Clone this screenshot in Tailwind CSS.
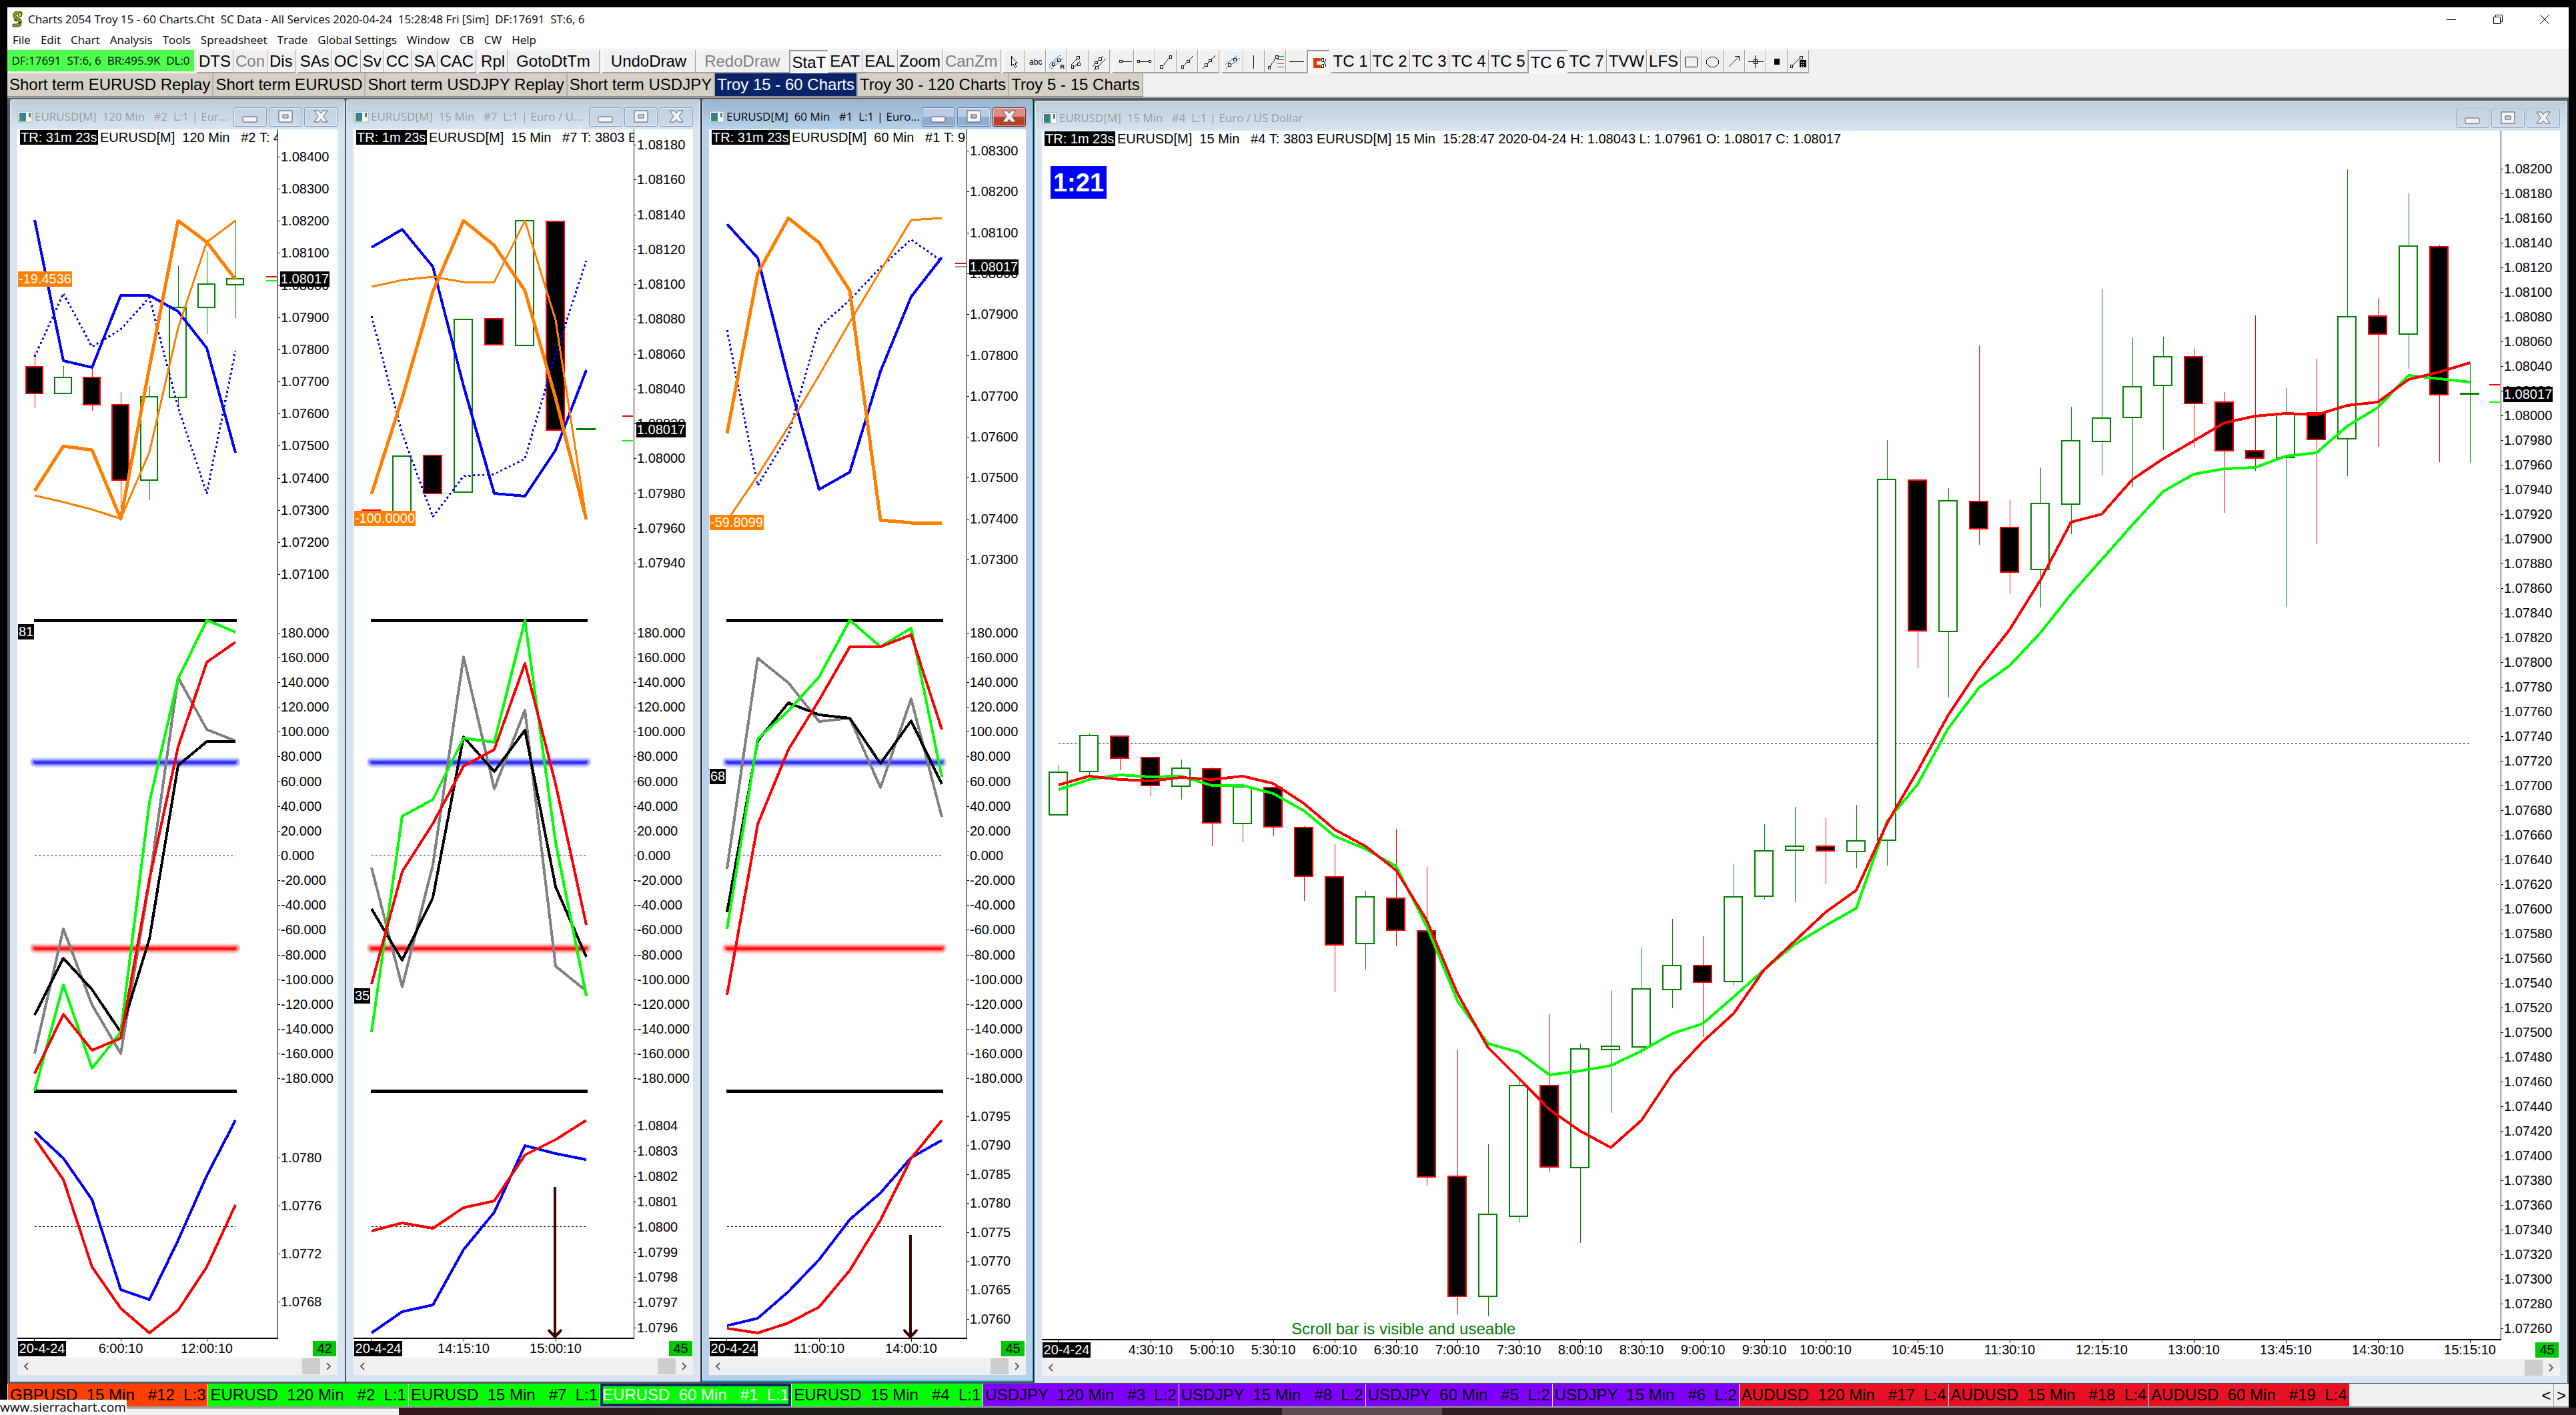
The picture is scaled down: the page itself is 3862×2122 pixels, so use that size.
<!DOCTYPE html>
<html lang="en">
<head>
  <meta charset="UTF-8" />
  <meta name="viewport" content="width=device-width, initial-scale=1.0" />
  <title>Charts 2054 Troy 15 - 60 Charts.Cht</title>
  <script src="https://cdn.jsdelivr.net/npm/@tailwindcss/browser@4"></script>
</head>
<body class="bg-black font-['Liberation_Sans',Arial,sans-serif] text-black">
  <div class="relative flex h-screen flex-col overflow-hidden px-[11px] pt-[11px]">

    <!-- Title bar -->
    <header class="flex h-[35px] shrink-0 items-center bg-white pl-[5px] font-['Open_Sans','Noto_Sans',sans-serif] text-[17px]">
      <svg class="mr-[6px] h-[24px] w-[20px]" viewBox="0 0 20 24" fill="none">
        <path d="M2 22h14" stroke="#b5b5b5" stroke-width="3" />
        <path d="M15 3c-5-3-10 0-9 4s7 4 8 8-3 7-9 6" stroke="#2f3f05" stroke-width="5" stroke-linecap="round" />
        <path d="M15 3c-5-3-10 0-9 4s7 4 8 8-3 7-9 6" stroke="#8fae12" stroke-width="3" stroke-linecap="round" />
        <circle cx="14" cy="5" r="3" fill="#c6d62a" stroke="#2f3f05" />
        <path d="M5 12l4 3M12 18l4-2" stroke="#2f3f05" stroke-width="2" />
      </svg>
      <h1 class="whitespace-pre">Charts 2054 Troy 15 - 60 Charts.Cht  SC Data - All Services 2020-04-24  15:28:48 Fri [Sim]  DF:17691  ST:6, 6</h1>
      <div class="ml-auto flex gap-[10px] pr-[6px]">
        <button aria-label="Minimize" class="flex h-[30px] w-[60px] items-center justify-center">
          <svg class="h-4 w-4" viewBox="0 0 16 16"><path d="M1 8.500h14" stroke="#000" /></svg>
        </button>
        <button aria-label="Restore" class="flex h-[30px] w-[60px] items-center justify-center">
          <svg class="h-4 w-4" viewBox="0 0 16 16" fill="none" stroke="#000"><path d="M1.500 4.500h10v10h-10zM4.500 4V1.500h10v10H12" /></svg>
        </button>
        <button aria-label="Close" class="flex h-[30px] w-[60px] items-center justify-center">
          <svg class="h-4 w-4" viewBox="0 0 16 16"><path d="M1 1l14 14M15 1L1 15" stroke="#000" /></svg>
        </button>
      </div>
    </header>

    <!-- Menu -->
    <nav id="menu" class="flex h-[27px] shrink-0 items-center gap-[15px] bg-white pl-2 font-['Open_Sans','Noto_Sans',sans-serif] text-[17px]"></nav>

    <!-- Control bar -->
    <div id="toolbar" class="flex h-[37px] shrink-0 items-stretch gap-[4px] bg-[#f0f0f0] pt-[2px] text-[24px] leading-[30px]">
      <div class="mb-[3px] flex w-[280px] shrink-0 items-center justify-center whitespace-pre bg-[#4cff4c] font-['Open_Sans','Noto_Sans',sans-serif] text-[17px] leading-[32px]">DF:17691  ST:6, 6  BR:495.9K  DL:0</div>
    </div>

    <!-- Chartbook tabs -->
    <div id="books" class="flex h-[35px] shrink-0 items-stretch bg-[#f0f0f0] text-[24px]"></div>

    <!-- Chart windows -->
    <main id="desktop" class="flex min-h-0 flex-1 border-t-2 border-[#a0a0a0] bg-[#5a5e63] pt-px pr-px pl-[3px]"></main>

    <!-- Chart tabs -->
    <div id="charts" class="flex h-[36px] shrink-0 items-stretch gap-px border-b-2 border-[#9a9a9a] bg-[#f0f0f0] pl-px text-[24px]"></div>

    <!-- Desktop strip under the main window -->
    <div class="-mx-[11px] flex h-[11px] shrink-0 bg-[#2f1f22]">
      <div class="w-[598px] border-t-2 border-[#b4b4b4] bg-[#f0f0f0]"></div>
      <div class="w-[1324px] bg-linear-to-r from-[#35181c] via-[#1e201c] to-[#2a2124]"></div>
      <div class="w-[240px] bg-[#5a4c4e]"></div>
    </div>
    <div class="absolute bottom-0 left-0 h-[23px] w-[190px] bg-white font-['Open_Sans','Noto_Sans',sans-serif] text-[19px] leading-[23px]">www.sierrachart.com</div>
  </div>

  <script>
    const menuItems = ["File", "Edit", "Chart", "Analysis", "Tools", "Spreadsheet", "Trade", "Global Settings", "Window", "CB", "CW", "Help"];
    document.getElementById("menu").innerHTML = menuItems.map(m => `<button>${m}</button>`).join("");

    // Small square handle used by the drawing tool icons
    const knob = (x, y) => `<rect x="${x - 2}" y="${y - 2}" width="4" height="4" fill="#f0f0f0" stroke="#000"/>`;
    const ln = (d, c = "#000") => `<path d="${d}" stroke="${c}" fill="none"/>`;

    const icons = {
      pointer: ln("M12.500 9v15l3-3 3 6 2-1-2-6h4z"),
      text: `<text x="7" y="22" font-size="13" fill="#000">abc</text>`,
      regression: ln("M5 22L23 7M6 30L26 13M5 26L22 12", "#1060c0") + knob(20, 15) + knob(12, 22) + `<text x="22" y="29" font-size="10" font-weight="bold" fill="#000">R</text>`,
      parallel: ln("M6 22L17 12M8 28L20 17") + knob(17, 11) + knob(18, 22) + knob(8, 26),
      channel: ln("M6 25L23 8M8 31L27 13") + knob(18, 13) + knob(12, 19) + knob(13, 27),
      ray: ln("M14 17.500h16") + knob(13, 17),
      segment: ln("M8 17.500h16") + knob(7, 17) + knob(25, 17),
      line: ln("M11 25L23 10") + knob(10, 26) + knob(24, 10),
      rayUp: ln("M10 25L26 8") + knob(9, 26) + knob(18, 17),
      extended: ln("M7 29L27 7") + knob(13, 23) + knob(19, 16),
      channelBlue: ln("M5 22L24 8M6 28L28 12", "#1060c0") + knob(20, 14) + knob(12, 23),
      vertical: ln("M16.500 7v22"),
      fib: ln("M7 27L19 9") + knob(7, 27) + knob(19, 10) + ln("M20 9.500h10", "#0a8a0a") + ln("M20 14.500h10", "#1060c0") + ln("M20 20.500h10", "#e04000") + ln("M20 26.500h10", "#9000c0"),
      horizontal: ln("M5 17.500h23"),
      magnet: `<path d="M20 12h-9v11h9" stroke="#e83a00" stroke-width="5" fill="none"/>` + ln("M21.500 10v5h3v-5zM21.500 20v5h3v-5z") + ln("M27.500 12v3l-2 2 2 3v3"),
      rect: ln("M6.500 10.500h19v15h-19z"),
      ellipse: `<ellipse cx="16" cy="18" rx="10" ry="8" fill="none" stroke="#000"/>`,
      arrow: ln("M8 26L24 10M18 9.500h6.500v6"),
      cross: ln("M5 17.500h24M16.500 7v21M13.500 14.500h6v6h-6z"),
      square: `<rect x="12" y="13" width="9" height="9" fill="#000"/>`,
      calculator: ln("M7 25L20 11") + knob(6, 25) + knob(21, 11) + `<rect x="19" y="15" width="10" height="12" fill="#000"/><path d="M21 18.500h6M21 22h6M21 25h6" stroke="#fff" stroke-dasharray="2 1"/>`
    };

    const groups = [
      ["DTS", "-Con", "Dis"],
      ["SAs", "OC", "Sv", "CC", "SA", "CAC"],
      ["Rpl", "+GotoDtTm"],
      ["+UndoDraw", "+-RedoDraw", "*StaT", "EAT", "EAL", "Zoom", "-CanZm"],
      ["@pointer", "@text", "@regression", "@parallel", "@channel"],
      ["@ray", "@segment", "@line", "@rayUp", "@extended"],
      ["@channelBlue", "@vertical", "@fib", "@horizontal", "*@magnet"],
      ["TC 1", "TC 2", "TC 3", "TC 4", "TC 5", "*TC 6", "TC 7", "TVW", "LFS", "@rect", "@ellipse", "@arrow", "@cross", "@square", "@calculator"]
    ];

    // Prefixes: - disabled, + wide, * pressed, @ icon
    function toolButton(key) {
      const label = key.replace(/^[-+*@]+/, "");
      const flags = key.slice(0, key.length - label.length);
      const face = flags.includes("*")
        ? "border-t-2 border-l border-[#9a9a9a] bg-[#f8f8f8] leading-[28px]"
        : "border-r border-b-2 border-[#a0a0a0] bg-[#f0f0f0] shadow-[inset_1px_1px_#fff]";
      if (flags.includes("@")) {
        return `<button aria-label="${label}" class="w-[32px] ${face}"><svg class="h-[32px] w-[31px]" viewBox="0 0 32 34" shape-rendering="crispEdges">${icons[label]}</svg></button>`;
      }
      const pad = flags.includes("+") ? "px-[13px]" : "px-[3px]";
      const ink = flags.includes("-") ? "text-[#7d7d7d]" : "text-black";
      return `<button class="whitespace-nowrap ${pad} ${ink} ${face}">${label}</button>`;
    }
    document.getElementById("toolbar").insertAdjacentHTML("beforeend",
      groups.map(g => `<div class="flex items-stretch">${g.map(toolButton).join("")}</div>`).join(""));

    const books = ["Short term EURUSD Replay", "Short term EURUSD", "Short term USDJPY Replay", "Short term USDJPY", "Troy 15 - 60 Charts", "Troy 30 - 120 Charts", "Troy 5 - 15 Charts"];
    document.getElementById("books").innerHTML = books.map((b, i) => {
      const face = i === 4 ? "bg-[#0a246a] text-white" : "bg-[#d4d0c8]";
      return `<button class="whitespace-nowrap border-r-2 border-b border-r-[#b4b0a8] border-b-[#8a8a8a] px-[3px] leading-[30px] ${face}">${b}</button>`;
    }).join("");

    const tabs = [
      ["GBPUSD  15 Min   #12  L:3", "bg-[#ff4000]"],
      ["EURUSD  120 Min   #2  L:1", "bg-[#00ff00]"],
      ["EURUSD  15 Min   #7  L:1", "bg-[#00ff00]"],
      ["EURUSD  60 Min   #1  L:1", "bg-[#00ff00] text-white shadow-[inset_0_0_0_4px_#0a246a]"],
      ["EURUSD  15 Min   #4  L:1", "bg-[#00ff00]"],
      ["USDJPY  120 Min   #3  L:2", "bg-[#8000ff]"],
      ["USDJPY  15 Min   #8  L:2", "bg-[#8000ff]"],
      ["USDJPY  60 Min   #5  L:2", "bg-[#8000ff]"],
      ["USDJPY  15 Min   #6  L:2", "bg-[#8000ff]"],
      ["AUDUSD  120 Min   #17  L:4", "bg-[#e81123]"],
      ["AUDUSD  15 Min   #18  L:4", "bg-[#e81123]"],
      ["AUDUSD  60 Min   #19  L:4", "bg-[#e81123]"]
    ];
    document.getElementById("charts").innerHTML =
      tabs.map(([t, c]) => `<button class="whitespace-pre px-[3px] leading-[34px] ${c}">${t}</button>`).join("") +
      `<div class="ml-auto flex"><button class="w-[22px] border-r border-[#a0a0a0]">&lt;</button><button class="w-[22px]">&gt;</button></div>`;

    // ---- Charts ----
    const BLUE = "#0000ff", ORANGE = "#ff8000", GRAY = "#808080", BLACK = "#000", GREEN = "#00ff00", RED = "#ff0000";

    const charts = [
      {
        caption: "EURUSD[M]  120 Min   #2  L:1 | Eur...", tr: "TR: 31m 23s", trW: 117,
        header: "EURUSD[M]  120 Min   #2 T: 4", size: "flex-[480] mb-[2px]",
        x: 26, y: 194, w: 480, axis: 416, right: 504, first: 52, step: 43, body: 26, num: "42",
        scales: [{ from: 1.084, by: -0.001, n: 14, dp: 5, y: 235, dy: 48.15 }, { from: 1.078, by: -0.0004, n: 4, dp: 4, y: 1736, dy: 72 }],
        times: [[3, "6:00:10"], [6, "12:00:10"]],
        marks: [[415, RED], [421, GREEN]], price: 418, tag: [418, "-19.4536", 81], level: [947, "81"],
        candles: [["r", 550, 590, 527, 612], ["g", 566, 590, 549, 590], ["r", 566, 607, 550, 616], ["r", 607, 720, 588, 778], ["g", 595, 720, 579, 750], ["g", 461, 596, 399, 608], ["g", 426, 461, 377, 501], ["g", 418, 427, 331, 477]],
        lines: [
          [BLUE, 4, [330, 541, 551, 443, 443, 467, 522, 679]],
          [BLUE, 3, [535, 440, 520, 494, 446, 611, 740, 526], "3 4"],
          [ORANGE, 5, [736, 669, 675, 778, 551, 331, 363, 419]],
          [ORANGE, 3, [743, 753, 764, 778, 678, 492, 363, 331]],
          [GRAY, 4, [1580, 1393, 1507, 1580, 1322, 1016, 1094, 1111]],
          [BLACK, 4, [1522, 1437, 1484, 1548, 1408, 1148, 1112, 1112]],
          [GREEN, 4, [1636, 1477, 1602, 1548, 1203, 1018, 930, 948]],
          [RED, 4, [1610, 1521, 1575, 1557, 1319, 1120, 993, 963]],
          [BLUE, 4, [1697, 1737, 1799, 1934, 1949, 1860, 1763, 1680]],
          [RED, 4, [1707, 1769, 1900, 1962, 1999, 1965, 1900, 1807]]
        ]
      },
      {
        caption: "EURUSD[M]  15 Min   #7  L:1 | Euro / U...", tr: "TR: 1m 23s", trW: 106,
        header: "EURUSD[M]  15 Min   #7 T: 3803 E", size: "flex-[509] mb-[2px]",
        x: 530, y: 194, w: 509, axis: 950, right: 1038, first: 557, step: 46, body: 28, num: "45",
        scales: [{ from: 1.0818, by: -0.0002, n: 13, dp: 5, y: 217, dy: 52.26 }, { from: 1.0804, by: -0.0001, n: 9, dp: 4, y: 1688, dy: 37.9 }],
        times: [[3, "14:15:10"], [6, "15:00:10"]],
        marks: [[624, RED], [661, GREEN]], price: 644, tag: [777, "-100.0000", 92], level: [1493, "35"], arrow: [6, 1780],
        candles: [["r", 765, 775, 765, 775], ["g", 684, 770, 684, 770], ["r", 683, 740, 683, 740], ["g", 479, 738, 479, 738], ["r", 478, 517, 478, 517], ["g", 331, 518, 331, 518], ["r", 332, 645, 332, 645], ["g", 643, 644, 643, 644]],
        lines: [
          [BLUE, 4, [371, 344, 400, 579, 740, 744, 675, 555]],
          [BLUE, 3, [474, 650, 775, 714, 711, 688, 531, 391], "3 4"],
          [ORANGE, 5, [741, 597, 437, 331, 368, 436, 597, 779]],
          [ORANGE, 3, [430, 420, 415, 423, 423, 331, 480, 779]],
          [GRAY, 4, [1301, 1480, 1297, 985, 1183, 1065, 1449, 1486]],
          [BLACK, 4, [1363, 1440, 1346, 1105, 1157, 1095, 1330, 1435]],
          [GREEN, 4, [1548, 1224, 1199, 1107, 1113, 930, 1264, 1494]],
          [RED, 4, [1476, 1307, 1235, 1149, 1124, 995, 1176, 1387]],
          [BLUE, 4, [1999, 1967, 1957, 1874, 1818, 1718, 1730, 1739]],
          [RED, 4, [1846, 1834, 1842, 1811, 1801, 1732, 1709, 1680]]
        ]
      },
      {
        caption: "EURUSD[M]  60 Min   #1  L:1 | Euro...", tr: "TR: 31m 23s", trW: 117, active: true,
        header: "EURUSD[M]  60 Min   #1 T: 9", size: "flex-[475] mb-[2px]",
        x: 1063, y: 194, w: 475, axis: 1449, right: 1536, first: 1090, step: 46, body: 28, num: "45",
        scales: [{ from: 1.083, by: -0.001, n: 11, dp: 5, y: 226, dy: 61.3 }, { from: 1.0795, by: -0.0005, n: 8, dp: 4, y: 1674, dy: 43.4 }],
        times: [[3, "11:00:10"], [6, "14:00:10"]],
        marks: [[395, RED], [400, "#80a080"]], price: 400, tag: [783, "-59.8099", 81], level: [1164, "68"], arrow: [6, 1852],
        candles: [],
        lines: [
          [BLUE, 4, [336, 387, 568, 734, 708, 557, 445, 386]],
          [BLUE, 3, [495, 728, 652, 491, 450, 401, 359, 392], "3 4"],
          [ORANGE, 5, [650, 410, 327, 364, 436, 780, 784, 784]],
          [ORANGE, 3, [781, 713, 640, 563, 483, 406, 330, 327]],
          [GRAY, 4, [1303, 987, 1024, 1082, 1077, 1181, 1048, 1225]],
          [BLACK, 4, [1368, 1111, 1054, 1072, 1077, 1145, 1081, 1176]],
          [GREEN, 4, [1393, 1108, 1066, 1015, 930, 970, 942, 1165]],
          [RED, 4, [1492, 1236, 1124, 1050, 970, 970, 952, 1094]],
          [BLUE, 4, [1988, 1977, 1937, 1889, 1829, 1789, 1736, 1710]],
          [RED, 4, [1992, 1999, 1984, 1960, 1905, 1830, 1737, 1680]]
        ]
      },
      {
        caption: "EURUSD[M]  15 Min   #4  L:1 | Euro / US Dollar", tr: "TR: 1m 23s", trW: 106, main: true,
        header: "EURUSD[M]  15 Min   #4 T: 3803 EURUSD[M] 15 Min  15:28:47 2020-04-24 H: 1.08043 L: 1.07961 O: 1.08017 C: 1.08017",
        size: "flex-[2276] mt-[2px]",
        x: 1562, y: 196, w: 2276, axis: 3749, right: 3836, first: 1587, step: 46, body: 28, num: "45",
        scales: [{ from: 1.082, by: -0.0002, n: 48, dp: 5, y: 253, dy: 37.01 }],
        times: [[3, "4:30:10"], [5, "5:00:10"], [7, "5:30:10"], [9, "6:00:10"], [11, "6:30:10"], [13, "7:00:10"], [15, "7:30:10"], [17, "8:00:10"], [19, "8:30:10"], [21, "9:00:10"], [23, "9:30:10"], [25, "10:00:10"], [28, "10:45:10"], [31, "11:30:10"], [34, "12:15:10"], [37, "13:00:10"], [40, "13:45:10"], [43, "14:30:10"], [46, "15:15:10"]],
        marks: [[577, RED], [603, GREEN]], price: 591,
        candles: [
          ["g", 1158, 1222, 1147, 1222], ["g", 1103, 1157, 1100, 1162], ["r", 1104, 1137, 1104, 1155], ["r", 1136, 1178, 1136, 1194], ["g", 1152, 1179, 1139, 1199],
          ["r", 1153, 1234, 1151, 1269], ["g", 1180, 1235, 1174, 1263], ["r", 1181, 1240, 1181, 1254], ["r", 1241, 1314, 1239, 1351], ["r", 1315, 1417, 1266, 1488],
          ["g", 1345, 1415, 1336, 1454], ["r", 1347, 1395, 1243, 1419], ["r", 1396, 1765, 1300, 1779], ["r", 1764, 1944, 1574, 1972], ["g", 1821, 1944, 1716, 1974],
          ["g", 1628, 1824, 1615, 1833], ["r", 1628, 1750, 1521, 1757], ["g", 1573, 1751, 1565, 1864], ["g", 1569, 1574, 1485, 1669], ["g", 1483, 1570, 1421, 1581],
          ["g", 1448, 1484, 1378, 1512], ["r", 1448, 1473, 1404, 1555], ["g", 1345, 1472, 1295, 1478], ["g", 1276, 1344, 1236, 1349], ["g", 1269, 1275, 1210, 1353],
          ["r", 1269, 1276, 1226, 1326], ["g", 1261, 1277, 1207, 1302], ["g", 719, 1260, 660, 1298], ["r", 720, 946, 720, 1002], ["g", 751, 947, 732, 1046],
          ["r", 752, 793, 518, 817], ["r", 791, 858, 749, 891], ["g", 755, 854, 701, 911], ["g", 661, 756, 610, 801], ["g", 627, 662, 433, 713],
          ["g", 580, 626, 507, 731], ["g", 535, 578, 505, 675], ["r", 535, 605, 521, 671], ["r", 603, 676, 588, 769], ["r", 676, 687, 473, 706],
          ["g", 620, 686, 582, 910], ["r", 619, 659, 538, 816], ["g", 475, 658, 254, 714], ["r", 474, 501, 447, 670], ["g", 369, 501, 290, 553],
          ["r", 370, 592, 367, 693], ["g", 590, 591, 544, 694]
        ],
        lines: [
          [GREEN, 4, [1184, 1169, 1162, 1165, 1164, 1178, 1178, 1190, 1216, 1254, 1273, 1299, 1389, 1501, 1565, 1578, 1612, 1606, 1598, 1576, 1550, 1535, 1495, 1454, 1416, 1388, 1362, 1232, 1176, 1092, 1031, 998, 949, 891, 839, 787, 737, 711, 703, 701, 684, 679, 639, 611, 563, 568, 573]],
          [RED, 4, [1177, 1164, 1169, 1171, 1166, 1169, 1164, 1175, 1205, 1244, 1269, 1305, 1380, 1490, 1571, 1617, 1664, 1696, 1721, 1680, 1611, 1562, 1520, 1454, 1411, 1368, 1335, 1235, 1156, 1072, 1003, 944, 870, 783, 771, 719, 688, 661, 634, 624, 620, 622, 608, 603, 569, 558, 544]]
        ]
      }
    ];

    const nb = s => s.replace(/ /g, "\u00a0");
    const hline = (x1, x2, y, c, w, extra = "") => `<line x1="${x1}" x2="${x2}" y1="${y}" y2="${y}" stroke="${c}" stroke-width="${w}" ${extra}/>`;
    const label = (x, y, s, c = "#000", anchor = "start") => `<text x="${x}" y="${y + 7}" fill="${c}" text-anchor="${anchor}">${nb(s)}</text>`;
    const box = (x, y, w, s, bg, c) => `<rect x="${x}" y="${y - 11}" width="${w}" height="23" fill="${bg}"/>` + label(x + w / 2, y, s, c, "middle");

    function drawChart(c) {
      const px = i => c.first + c.step * i;
      const count = c.lines[0][2].length;
      const last = px(count - 1);
      const bottom = c.y + 1813;
      let s = "";

      s += `<rect x="${c.x + 4}" y="${c.y + 1}" width="${c.trW}" height="22" fill="#000"/>`;
      s += label(c.x + 5, c.y + 12, c.tr, "#fff") + label(c.x + c.trW + 7, c.y + 12, c.header);

      if (c.main) {
        s += hline(c.first, last, 1114.5, "#000", 1, 'stroke-dasharray="3 3"');
      } else {
        s += hline(c.first, last, 1283.5, "#000", 1, 'stroke-dasharray="3 3"');
        s += hline(c.first, last, 1839.5, "#000", 1, 'stroke-dasharray="3 3"');
        s += hline(c.first - 1, last + 2, 930, "#000", 5) + hline(c.first - 1, last + 2, 1636, "#000", 5);
        // Glowing over/under lines
        [[1143, "#2020ff"], [1422, "#ff0000"]].forEach(([y, col]) => {
          [[15, 0.2], [11, 0.2], [7, 0.4], [3, 1]].forEach(([w, o]) => {
            s += hline(c.first, last, y, col, w, `stroke-linecap="round" stroke-opacity="${o}"`);
          });
        });
      }

      c.candles.forEach(([k, top, bot, hi, lo], i) => {
        const col = k === "g" ? "#008000" : RED;
        const fill = k === "g" ? "#fff" : "#000";
        s += `<path d="M${px(i) + 0.5} ${hi}V${top}M${px(i) + 0.5} ${bot}V${lo}" stroke="${col}"/>`;
        s += `<rect x="${px(i) - c.body / 2}" y="${top}" width="${c.body - 1}" height="${bot - top}" fill="${fill}" stroke="${col}" stroke-width="2"/>`;
      });

      c.lines.forEach(([col, w, ys, dash]) => {
        const pts = ys.map((y, i) => `${px(i)},${y}`).join(" ");
        s += `<polyline points="${pts}" fill="none" stroke="${col}" stroke-width="${w}" stroke-linejoin="round" ${dash ? `stroke-dasharray="${dash}"` : ""}/>`;
      });

      if (c.arrow) {
        const ax = px(c.arrow[0]) - 1;
        s += `<path d="M${ax} ${c.arrow[1]}V2005M${ax - 10} 1994L${ax} 2005L${ax + 10} 1994" stroke="#400000" stroke-width="4" fill="none"/>`;
      }

      // Price scale
      s += `<rect x="${c.axis}" y="${c.y}" width="${c.x + c.w - c.axis}" height="1842" fill="#fff"/>`;
      s += `<path d="M${c.axis + 0.5} ${c.y}V${bottom}" stroke="#000"/>` + hline(c.x, c.axis + 1, bottom, "#000", 2);
      const tick = (y, t) => hline(c.axis, c.axis + 4, y, "#000", 1) + label(c.axis + 5, y, t);
      c.scales.forEach(k => {
        for (let i = 0; i < k.n; i++) s += tick(Math.round(k.y + k.dy * i), (k.from + k.by * i).toFixed(k.dp));
      });
      if (!c.main) {
        for (let v = 180; v >= -180; v -= 20) s += tick(Math.round(1283 - v * 1.858), v.toFixed(3));
      }
      c.marks.forEach(([y, col]) => { s += hline(c.axis - 17, c.axis - 1, y, col, 2); });
      s += box(c.axis + 4, c.price, 74, "1.08017", "#000", "#fff");
      if (c.tag) s += box(c.x + 1, c.tag[0], c.tag[2], c.tag[1], ORANGE, "#fff");
      if (c.level) s += box(c.x + 1, c.level[0], 24, c.level[1], "#000", "#fff");

      // Time scale
      s += `<path d="M${c.first - 0.5} ${bottom}v5" stroke="#000"/>` + box(c.x + 1, bottom + 15, 72, "20-4-24", "#000", "#fff");
      c.times.forEach(([i, t]) => {
        s += `<path d="M${px(i) + 0.5} ${bottom}v5" stroke="#000"/>` + label(px(i), bottom + 15, t, "#000", "middle");
      });
      s += box(c.right - 35, bottom + 15, 35, c.num, "#00c800", "#000");

      if (c.main) {
        s += `<rect x="1575" y="249" width="84" height="49" fill="#0000ff"/><text x="1617" y="287" class="text-[38px] font-bold" fill="#fff" text-anchor="middle">1:21</text>`;
        s += `<text x="1936" y="2001" class="text-[24px]" fill="#008000">Scroll bar is visible and useable</text>`;
      }
      return `<svg class="block min-h-0 w-full flex-1 bg-white text-[20px]" viewBox="${c.x} ${c.y} ${c.w} 1842" shape-rendering="crispEdges">${s}</svg>`;
    }

    function frameButtons(active) {
      const face = active
        ? "border-[#5f7ba3] bg-linear-to-b from-[#b9cde6] from-50% to-[#8fadd0] to-50%"
        : "border-[#8b9cba] bg-linear-to-b from-[#c3d1e1] to-[#ccdaea]";
      const close = active ? "border-[#6b2a22] bg-linear-to-b from-[#dc8c80] from-50% to-[#b8402a] to-50%" : face;
      const base = "flex h-[29px] w-[50px] shrink-0 items-center justify-center rounded-[3px] border shadow-[inset_0_0_0_1px_#ffffff80]";
      return `
        <button aria-label="Minimize" class="${base} ${face}"><svg class="h-[20px] w-[26px]" viewBox="0 0 26 20"><rect x="2" y="10" width="21" height="8" rx="1" fill="#f4f4f4" stroke="#535666"/></svg></button>
        <button aria-label="Maximize" class="${base} ${face}"><svg class="h-[20px] w-[26px]" viewBox="0 0 26 20"><path fill-rule="evenodd" d="M3 1h20v17H3zM9 7v5h8V7z" fill="#f4f4f4" stroke="#535666"/></svg></button>
        <button aria-label="Close" class="${base} ${close}"><svg class="h-[20px] w-[26px]" viewBox="0 0 26 20"><path d="M3 1h7l3 4 3-4h7l-6 8.500 6 8.500h-7l-3-4-3 4H3l6-8.500z" fill="#f4f4f4" stroke="#535666"/></svg></button>`;
    }

    document.getElementById("desktop").innerHTML = charts.map(c => {
      const frame = c.active
        ? "border-[#101010] bg-[#b9d1ea] shadow-[inset_-2px_-2px_#30c8e8]"
        : "border-[#4a4e55] bg-[#d7e4f2]";
      const bar = c.active
        ? "bg-linear-to-b from-[#99b4d1] to-[#b9d1ea] text-black"
        : "bg-linear-to-b from-[#bfcddb] to-[#d7e4f2] text-[#9b9b9b]";
      return `
        <section class="flex min-w-0 flex-col rounded-t-[4px] border px-[11px] pb-[10px] ${frame} ${c.size}">
          <div class="-mx-[9px] flex h-[45px] shrink-0 items-center gap-[3px] border-t border-white/70 px-[9px] pt-[6px] ${bar}">
            <svg class="h-[18px] w-[23px] shrink-0" viewBox="0 0 23 18"><rect x="1" y="1" width="21" height="16" fill="#fff" stroke="#a8a8a8"/><rect x="3" y="3" width="10" height="13" fill="#2f8a78"/><rect x="3" y="3" width="10" height="5" fill="#3b78a8"/><rect x="17" y="3" width="3" height="7" fill="#3c8c70"/></svg>
            <h2 class="mr-auto min-w-0 overflow-hidden whitespace-pre font-['Open_Sans','Noto_Sans',sans-serif] text-[17px]">${c.caption}</h2>
            ${frameButtons(c.active)}
          </div>
          ${drawChart(c)}
          <div class="flex h-[26px] shrink-0 items-center bg-[#f0f0f0]">
            <button aria-label="Scroll left" class="flex h-full w-[26px] items-center justify-center"><svg class="h-3 w-2" viewBox="0 0 8 12"><path d="M7 1L2 6l5 5" fill="none" stroke="#606060" stroke-width="2"/></svg></button>
            <div class="ml-auto h-[24px] w-[27px] bg-[#cdcdcd]"></div>
            <button aria-label="Scroll right" class="flex h-full w-[26px] items-center justify-center"><svg class="h-3 w-2" viewBox="0 0 8 12"><path d="M1 1l5 5-5 5" fill="none" stroke="#606060" stroke-width="2"/></svg></button>
          </div>
        </section>`;
    }).join("");
  </script>
</body>
</html>
